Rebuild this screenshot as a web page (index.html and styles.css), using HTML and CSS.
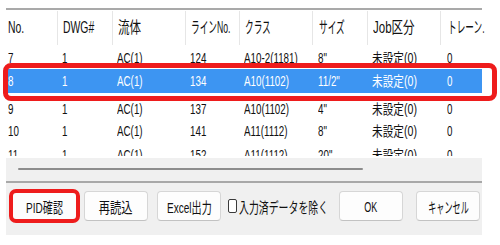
FILE: index.html
```html
<!DOCTYPE html>
<html lang="ja">
<head>
<meta charset="utf-8">
<link rel="stylesheet" href="styles.css">
</head>
<body>
<div class="dialog">
  <div class="list">
    <div class="row head">
      <div class="c c1"><span class="t">No.</span></div>
      <div class="c c2"><span class="t">DWG#</span></div>
      <div class="c c3"><span class="t kj">流体</span></div>
      <div class="c c4"><span class="t k">ラインNo.</span></div>
      <div class="c c5"><span class="t k">クラス</span></div>
      <div class="c c6"><span class="t k">サイズ</span></div>
      <div class="c c7"><span class="t kj">Job区分</span></div>
      <div class="c c8"><span class="t k">トレーン.</span></div>
    </div>
    <div class="row">
      <div class="c c1"><span class="t">7</span></div>
      <div class="c c2"><span class="t">1</span></div>
      <div class="c c3"><span class="t">AC(1)</span></div>
      <div class="c c4"><span class="t">124</span></div>
      <div class="c c5"><span class="t">A10-2(1181)</span></div>
      <div class="c c6"><span class="t">8"</span></div>
      <div class="c c7"><span class="t kj">未設定(0)</span></div>
      <div class="c c8"><span class="t">0</span></div>
    </div>
    <div class="row sel">
      <div class="c c1"><span class="t">8</span></div>
      <div class="c c2"><span class="t">1</span></div>
      <div class="c c3"><span class="t">AC(1)</span></div>
      <div class="c c4"><span class="t">134</span></div>
      <div class="c c5"><span class="t">A10(1102)</span></div>
      <div class="c c6"><span class="t">11/2"</span></div>
      <div class="c c7"><span class="t kj">未設定(0)</span></div>
      <div class="c c8"><span class="t">0</span></div>
    </div>
    <div class="row">
      <div class="c c1"><span class="t">9</span></div>
      <div class="c c2"><span class="t">1</span></div>
      <div class="c c3"><span class="t">AC(1)</span></div>
      <div class="c c4"><span class="t">137</span></div>
      <div class="c c5"><span class="t">A10(1102)</span></div>
      <div class="c c6"><span class="t">4"</span></div>
      <div class="c c7"><span class="t kj">未設定(0)</span></div>
      <div class="c c8"><span class="t">0</span></div>
    </div>
    <div class="row">
      <div class="c c1"><span class="t">10</span></div>
      <div class="c c2"><span class="t">1</span></div>
      <div class="c c3"><span class="t">AC(1)</span></div>
      <div class="c c4"><span class="t">141</span></div>
      <div class="c c5"><span class="t">A11(1112)</span></div>
      <div class="c c6"><span class="t">8"</span></div>
      <div class="c c7"><span class="t kj">未設定(0)</span></div>
      <div class="c c8"><span class="t">0</span></div>
    </div>
    <div class="row cut">
      <div class="c c1"><span class="t">11</span></div>
      <div class="c c2"><span class="t">1</span></div>
      <div class="c c3"><span class="t">AC(1)</span></div>
      <div class="c c4"><span class="t">152</span></div>
      <div class="c c5"><span class="t">A11(1112)</span></div>
      <div class="c c6"><span class="t">20"</span></div>
      <div class="c c7"><span class="t kj">未設定(0)</span></div>
      <div class="c c8"><span class="t">0</span></div>
    </div>
  </div>
  <div class="hscroll"><div class="thumb"></div></div>
  <div class="foot">
    <button class="btn pid"><span class="bt">PID確認</span></button>
    <button class="btn reload"><span class="bt kj">再読込</span></button>
    <button class="btn excel"><span class="bt">Excel出力</span></button>
    <label class="chk"><span class="box"></span><span class="bt lbl">入力済データを除く</span></label>
    <button class="btn ok"><span class="bt okt">OK</span></button>
    <button class="btn cancel"><span class="bt kana">キャンセル</span></button>
  </div>
</div>
</body>
</html>
```

FILE: styles.css
```css
* { box-sizing: border-box; }
html, body { margin: 0; padding: 0; background: #fff; }
body {
  font-family: "Liberation Sans", "Noto Sans CJK JP", sans-serif;
  font-size: 14px;
  color: #111;
  width: 500px;
  height: 245px;
  overflow: hidden;
}
.dialog {
  margin: 8px 0 0 6px;
  width: 476px;
}
.list {
  border-top: 2px solid #a9a9a9;
  height: 150px;
}
.row {
  display: grid;
  grid-template-columns: 51px 55px 73px 54px 73px 55px 73px 42px;
  height: 22px;
  line-height: 22px;
  white-space: nowrap;
}
.c { padding-left: 5px; }
.c1 { padding-left: 2px; }
.c6 { padding-left: 6px; }
.c8 { padding-left: 7px; }
.t {
  display: inline-block;
  transform: scaleX(0.7);
  transform-origin: 0 50%;
}
.t.k { transform: scaleX(0.58); }
.t.kj { transform: scaleX(0.76); }

.head {
  height: 37px;
  line-height: 33px;
  font-size: 16px;
  padding-top: 1px;
}
.head .c { border-left: 1px solid #e6e6e6; margin-bottom: 2px; }
.head .c1 { border-left: none; }
.head .t { transform: scaleX(0.65); }
.head .t.k { transform: scaleX(0.54); }
.head .t.kj { transform: scaleX(0.72); }

.sel {
  position: relative;
  height: 29px;
  line-height: 24px;
  color: #fff;
  background: linear-gradient(#3d95f2, #3d95f2) 2px 0 / 475px 24px no-repeat;
}
.sel::after {
  content: "";
  position: absolute;
  left: -3px;
  right: -15px;
  top: -6px;
  bottom: -3px;
  border: 5px solid #ee1c1c;
  border-radius: 8px;
}
.cut {
  height: 14px;
  padding-top: 2px;
  overflow: hidden;
}

.hscroll {
  height: 23px;
  background: #f0f0f0;
  padding: 10px 119px 0 12px;
}
.thumb {
  height: 2px;
  border-radius: 1px;
  background: #8c8c8c;
}
.foot {
  border-top: 2px solid #a8a8a8;
  background: #f0f0f0;
  height: 54px;
  display: flex;
  align-items: flex-start;
  padding: 8px 0 0 6px;
}
.btn {
  font-family: inherit;
  font-size: 15px;
  color: #111;
  height: 30px;
  width: 64px;
  padding: 0;
  background: #fdfdfd;
  border: 1px solid #d6d6d6;
  border-bottom-color: #c2c2c2;
  border-radius: 4px;
  display: flex;
  align-items: center;
  justify-content: center;
  white-space: nowrap;
  overflow: visible;
}
.bt {
  display: inline-block;
  transform: scaleX(0.67);
  transform-origin: 50% 50%;
}
.bt.kj { transform: scaleX(0.75); }
.bt.okt { transform: scaleX(0.6); }
.bt.kana { transform: scaleX(0.54); }
.pid { width: 65px; position: relative; }
.pid::after {
  content: "";
  position: absolute;
  left: -4px;
  right: -4px;
  top: -3px;
  bottom: -3px;
  border: 4px solid #ee1c1c;
  border-radius: 7px;
}
.reload { margin-left: 7px; }
.excel { margin-left: 9px; }
.chk {
  margin-left: 7px;
  width: 99px;
  height: 30px;
  display: flex;
  align-items: center;
  font-size: 15px;
  white-space: nowrap;
}
.box {
  flex: none;
  width: 9px;
  height: 14px;
  border: 1px solid #3a3a3a;
  border-radius: 2px;
  background: #fff;
}
.bt.lbl {
  transform: scaleX(0.66);
  transform-origin: 0 50%;
  margin-left: 2px;
}
.ok { margin-left: 12px; }
.cancel { margin-left: 13px; }
```
